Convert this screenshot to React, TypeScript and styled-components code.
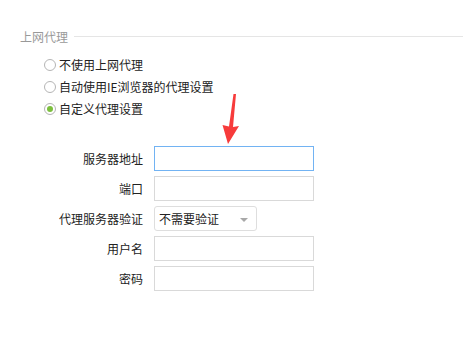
import styled, { createGlobalStyle } from "styled-components";

const GlobalStyle = createGlobalStyle`
  html, body {
    margin: 0;
    padding: 0;
    background: #fff;
  }
  body {
    font-family: "Noto Sans CJK SC", "Microsoft YaHei", sans-serif;
    font-size: 12px;
    color: #222;
  }
`;

const Page = styled.div`
  width: 463px;
  height: 338px;
  position: relative;
  overflow: hidden;
  padding-top: 29px;
  box-sizing: border-box;
`;

const SectionHeader = styled.div`
  display: flex;
  align-items: center;
  gap: 6px;
  padding-left: 20px;
  height: 16px;
`;

const SectionTitle = styled.span`
  color: #999;
  font-size: 12px;
  line-height: 16px;
  white-space: nowrap;
`;

const SectionLine = styled.div`
  flex: 1;
  height: 1px;
  background: #e5e5e5;
  margin-top: -2px;
`;

const RadioList = styled.div`
  display: flex;
  flex-direction: column;
  gap: 6px;
  padding-left: 44px;
  margin-top: 12px;
`;

const RadioRow = styled.label`
  display: flex;
  align-items: center;
  gap: 3px;
  height: 16px;
  line-height: 16px;
  color: #222;
`;

const RadioDot = styled.span<{ $checked?: boolean }>`
  width: 12px;
  height: 12px;
  box-sizing: border-box;
  border-radius: 50%;
  border: 1px solid #b5b5b5;
  background: #fff;
  display: flex;
  align-items: center;
  justify-content: center;
  &::after {
    content: "";
    width: 6px;
    height: 6px;
    border-radius: 50%;
    background: ${(p) => (p.$checked ? "#7cbf3d" : "transparent")};
  }
`;

const Form = styled.div`
  display: grid;
  grid-template-columns: 143px 160px;
  column-gap: 11px;
  row-gap: 5px;
  margin-top: 29px;
  align-items: center;
`;

const Label = styled.span`
  text-align: right;
  color: #222;
  line-height: 16px;
`;

const TextInput = styled.div<{ $focused?: boolean }>`
  height: 25px;
  box-sizing: border-box;
  border: 1px solid ${(p) => (p.$focused ? "#72b3f3" : "#d9d9d9")};
  background: #fff;
`;

const Select = styled.div`
  width: 103px;
  height: 25px;
  box-sizing: border-box;
  border: 1px solid #dedede;
  border-radius: 3px;
  display: flex;
  align-items: center;
  justify-content: space-between;
  padding: 0 8px 0 4px;
  color: #222;
`;

const Caret = styled.span`
  width: 0;
  height: 0;
  border-left: 4px solid transparent;
  border-right: 4px solid transparent;
  border-top: 4px solid #a8a8a8;
  margin-top: 2px;
`;

const Arrow = styled.svg`
  position: absolute;
  left: 220px;
  top: 93px;
`;

export default function App() {
  return (
    <>
      <GlobalStyle />
      <Page>
        <SectionHeader>
          <SectionTitle>上网代理</SectionTitle>
          <SectionLine />
        </SectionHeader>
        <RadioList>
          <RadioRow>
            <RadioDot />
            不使用上网代理
          </RadioRow>
          <RadioRow>
            <RadioDot />
            自动使用IE浏览器的代理设置
          </RadioRow>
          <RadioRow>
            <RadioDot $checked />
            自定义代理设置
          </RadioRow>
        </RadioList>
        <Form>
          <Label>服务器地址</Label>
          <TextInput $focused />
          <Label>端口</Label>
          <TextInput />
          <Label>代理服务器验证</Label>
          <Select>
            不需要验证
            <Caret />
          </Select>
          <Label>用户名</Label>
          <TextInput />
          <Label>密码</Label>
          <TextInput />
        </Form>
        <Arrow width="22" height="52" viewBox="0 0 22 52">
          <path d="M13.5 1 L16 1 L13 34 L19 33 L8 51 L2.5 32 L9 33.5 Z" fill="#f73b3b" />
        </Arrow>
      </Page>
    </>
  );
}
